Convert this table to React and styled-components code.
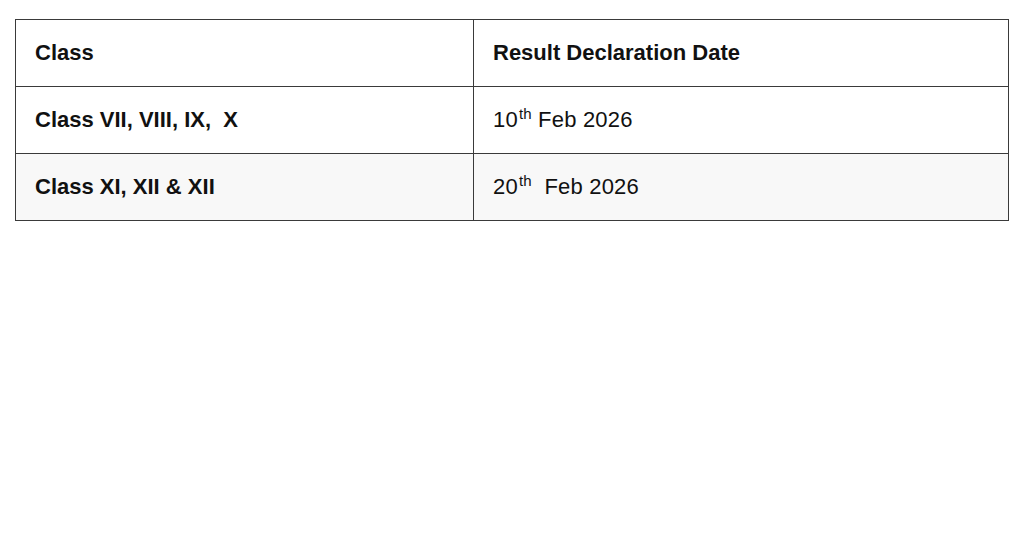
import React from 'react';
import styled, { createGlobalStyle } from 'styled-components';

const GlobalStyle = createGlobalStyle`
  html, body {
    margin: 0;
    padding: 0;
    background: #fff;
  }
  body {
    font-family: 'Liberation Sans', Arial, sans-serif;
    color: #111;
  }
`;

const Page = styled.div`
  padding: 19px 16px 0 15px;
`;

const Table = styled.table`
  width: 994px;
  border-collapse: collapse;
  table-layout: fixed;
  border: 1px solid #3a3a3a;
`;

const Col = styled.col`
  width: ${({ $w }) => $w || 'auto'};
`;

const Row = styled.tr`
  height: 67px;
  background: ${({ $striped }) => ($striped ? '#f8f8f8' : '#fff')};
`;

const Cell = styled.td`
  border: 1px solid #3a3a3a;
  padding: 0 0 0 19px;
  font-size: 22px;
  font-weight: ${({ $bold }) => ($bold ? 700 : 400)};
  letter-spacing: ${({ $bold }) => ($bold ? '0' : '0.2px')};
  vertical-align: middle;
  white-space: pre;

  sup {
    font-size: 15px;
    vertical-align: 8px;
    line-height: 0;
    margin-left: 1px;
  }
`;

const rows = [
  { cls: 'Class VII, VIII, IX,  X', day: '10', gap: ' ' },
  { cls: 'Class XI, XII & XII', day: '20', gap: '  ' },
];

export default function App() {
  return (
    <Page>
      <GlobalStyle />
      <Table>
        <colgroup>
          <Col $w="458px" />
          <Col />
        </colgroup>
        <tbody>
          <Row>
            <Cell $bold>Class</Cell>
            <Cell $bold>Result Declaration Date</Cell>
          </Row>
          {rows.map((r, i) => (
            <Row key={r.day} $striped={i === 1}>
              <Cell $bold>{r.cls}</Cell>
              <Cell>
                {r.day}
                <sup>th</sup>
                {r.gap}Feb 2026
              </Cell>
            </Row>
          ))}
        </tbody>
      </Table>
    </Page>
  );
}
